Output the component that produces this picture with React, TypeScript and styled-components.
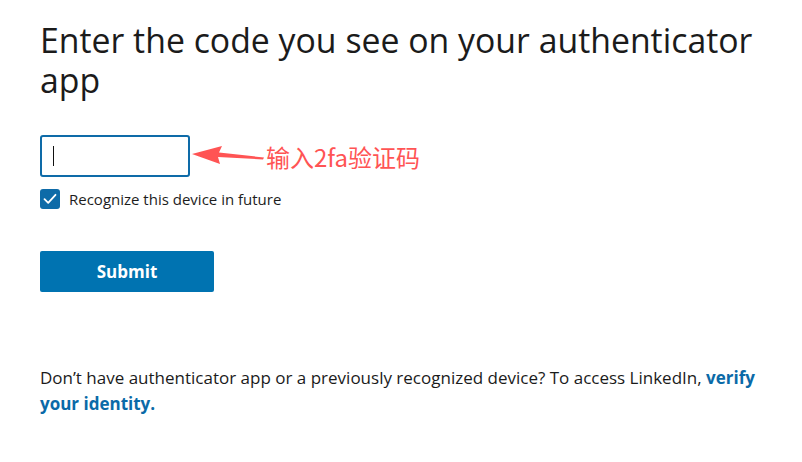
import React from 'react'
import styled, { createGlobalStyle } from 'styled-components'

const GlobalStyle = createGlobalStyle`
  body {
    margin: 0;
    background: #ffffff;
    font-family: 'Open Sans', 'Noto Sans', Arial, sans-serif;
    color: #1d1d1d;
  }
`

const Page = styled.div`
  padding: 20px 40px 0 40px;
  width: 802px;
  height: 462px;
  box-sizing: border-box;
`

const Title = styled.h1`
  margin: 0;
  font-size: 33.8px;
  line-height: 40px;
  font-weight: 400;
  color: #1b1b1b;
  width: 740px;
`

const CodeRow = styled.div`
  display: flex;
  align-items: center;
  margin-top: 35px;
`

const CodeBox = styled.div`
  width: 150px;
  height: 42px;
  box-sizing: border-box;
  border: 2px solid #0e6ba8;
  border-radius: 3px;
  display: flex;
  align-items: center;
  padding-left: 11px;
`

const Caret = styled.span`
  display: block;
  width: 1px;
  height: 20px;
  background: #111;
`

const Note = styled.span`
  margin-left: 2px;
  display: flex;
  align-items: center;
  gap: 2px;
  color: #ff5454;
  font-family: 'Noto Sans CJK SC', 'Noto Sans', sans-serif;
  font-size: 24px;
`

const CheckRow = styled.label`
  display: flex;
  align-items: center;
  gap: 9px;
  margin-top: 12px;
  font-size: 15px;
  color: #1d1d1d;
`

const CheckBox = styled.span`
  width: 20px;
  height: 20px;
  border-radius: 3px;
  background: #0e6ba8;
  display: flex;
  align-items: center;
  justify-content: center;
`

const SubmitButton = styled.button`
  margin-top: 42px;
  width: 174px;
  height: 41px;
  border: none;
  border-radius: 2px;
  background: #0073b1;
  color: #ffffff;
  font-family: 'Open Sans', sans-serif;
  font-size: 17px;
  font-weight: 700;
`

const Footer = styled.p`
  margin: 73px 0 0 0;
  width: 724px;
  font-size: 17px;
  line-height: 26px;
  color: #1b1b1b;
`

const Link = styled.a`
  color: #0a6aa8;
  font-weight: 700;
  text-decoration: none;
`

function Arrow() {
  return (
    <svg width="72" height="24" viewBox="0 0 72 24">
      <path d="M0 10 L30 2 L27 8.5 L72 13.5 L71 15.5 L26 13 L28 20 Z" fill="#ff5454" />
    </svg>
  )
}

function Check() {
  return (
    <svg width="14" height="12" viewBox="0 0 14 12">
      <path d="M1.5 6.2 L5.2 9.8 L12.5 1.8" fill="none" stroke="#fff" strokeWidth="1.8" strokeLinecap="round" strokeLinejoin="round" />
    </svg>
  )
}

export default function App() {
  return (
    <Page>
      <GlobalStyle />
      <Title>Enter the code you see on your authenticator app</Title>
      <CodeRow>
        <CodeBox>
          <Caret />
        </CodeBox>
        <Note>
          <Arrow />
          输入2fa验证码
        </Note>
      </CodeRow>
      <CheckRow>
        <CheckBox>
          <Check />
        </CheckBox>
        Recognize this device in future
      </CheckRow>
      <SubmitButton>Submit</SubmitButton>
      <Footer>
        Don’t have authenticator app or a previously recognized device? To access LinkedIn,{' '}
        <Link href="#">verify your identity.</Link>
      </Footer>
    </Page>
  )
}
